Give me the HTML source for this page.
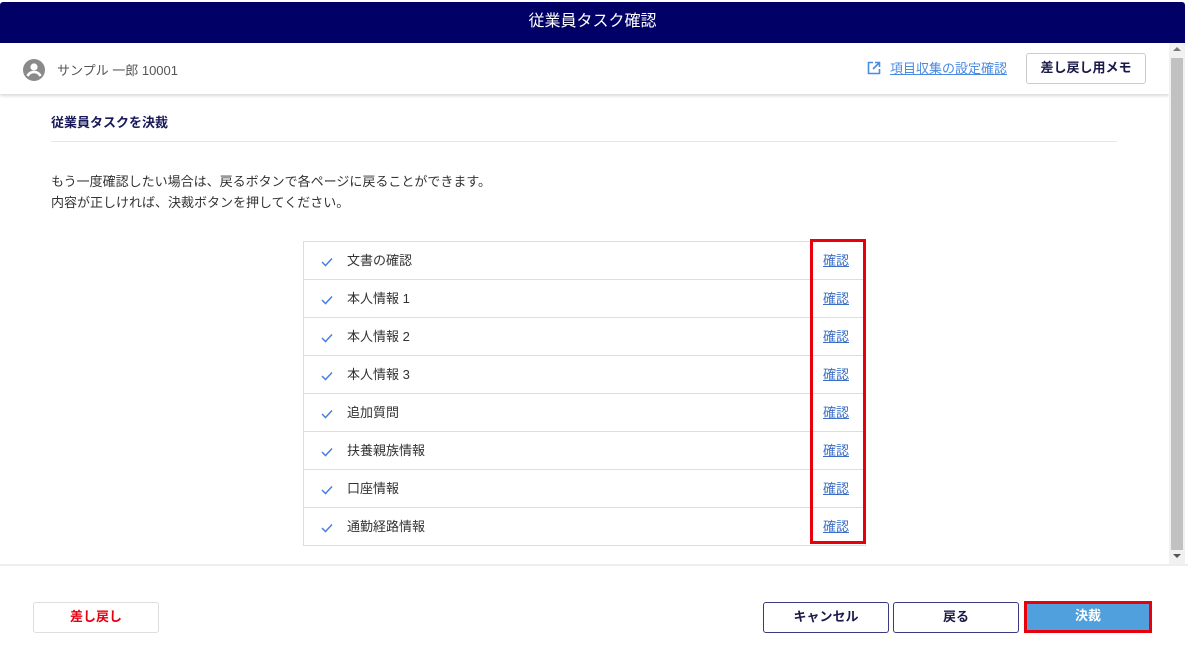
<!DOCTYPE html>
<html><head><meta charset="utf-8"><style>
*{box-sizing:border-box;margin:0;padding:0}
body{width:1188px;height:658px;background:#fff;font-family:"Liberation Sans","Noto Sans CJK JP",sans-serif;position:relative;overflow:hidden;color:#333}
.hdr{position:absolute;left:0;top:2px;width:1185px;height:41px;background:#000066;border-radius:3px 3px 0 0;color:#fff;font-size:16px;text-align:center;line-height:39px}
.sub{position:absolute;left:0;top:43px;width:1169px;height:51px;background:#fff;box-shadow:0 2px 3px rgba(0,0,0,.15)}
.sb{position:absolute;left:1169px;top:43px;width:16px;height:522px;background:#f1f1f1}
.sb .th{position:absolute;left:2px;top:15px;width:12px;height:492px;background:#c1c1c1}
.abs{position:absolute}
.btn{position:absolute;border:1px solid #3a3a80;border-radius:3px;background:#fff;font-weight:bold;font-size:13px;text-align:center;color:#1a1a4a}
.row{position:absolute;left:303px;width:563px;height:38px;border:1px solid #ddd;border-top:none;font-size:13px;color:#333}
.row .t{position:absolute;left:43px;top:8px}
.row .l{position:absolute;left:519px;top:8px;color:#3b6fc7;text-decoration:underline}
.row svg{position:absolute;left:17px;top:15px}
</style></head><body>
<div class="hdr">従業員タスク確認</div>
<div class="sub">
<svg class="abs" style="left:22px;top:15px" width="24" height="24" viewBox="0 0 24 24"><circle cx="12" cy="12" r="11" fill="#8a8a8a"/><circle cx="12" cy="9" r="3.6" fill="#fff"/><path d="M5.5 18c1.5-3 4-4 6.5-4s5 1 6.5 4" stroke="#fff" stroke-width="2.6" fill="none"/></svg>
<div class="abs" style="left:57px;top:17px;font-size:13px;color:#555">サンプル 一郎 10001</div>
<svg class="abs" style="left:867px;top:18px" width="14" height="14" viewBox="0 0 14 14"><path d="M6 1.5H1.5v11h11V8" stroke="#4a8be0" stroke-width="1.6" fill="none"/><path d="M8 1.5h4.5V6M12.5 1.5L6 8" stroke="#4a8be0" stroke-width="1.6" fill="none"/></svg>
<div class="abs" style="left:890px;top:15px;font-size:13px;color:#4a8be0;text-decoration:underline">項目収集の設定確認</div>
<div class="btn" style="left:1026px;top:10px;width:120px;height:31px;line-height:27px;border-color:#ccc">差し戻し用メモ</div>
</div>
<div class="sb"><div class="th"></div><div class="abs" style="left:4px;top:4px;border:4px solid transparent;border-bottom:4px solid #777;border-top:none"></div><div class="abs" style="left:4px;top:511px;border:4px solid transparent;border-top:4px solid #555;border-bottom:none"></div></div>
<div class="abs" style="left:51px;top:112px;font-size:13px;font-weight:bold;color:#1a1a5a">従業員タスクを決裁</div>
<div class="abs" style="left:51px;top:141px;width:1066px;height:1px;background:#e6e6e6"></div>
<div class="abs" style="left:51px;top:171px;font-size:13px;line-height:21px;color:#333">もう一度確認したい場合は、戻るボタンで各ページに戻ることができます。<br>内容が正しければ、決裁ボタンを押してください。</div>
<div class="abs" style="left:303px;top:241px;width:563px;height:1px;background:#ddd"></div>
<div class="row" style="top:242px"><svg width="12" height="10"><path d="M1 5l3.5 3.5L11 1.5" stroke="#4a7fe0" stroke-width="1.5" fill="none"/></svg><span class="t">文書の確認</span><span class="l">確認</span></div>
<div class="row" style="top:280px"><svg width="12" height="10"><path d="M1 5l3.5 3.5L11 1.5" stroke="#4a7fe0" stroke-width="1.5" fill="none"/></svg><span class="t">本人情報 1</span><span class="l">確認</span></div>
<div class="row" style="top:318px"><svg width="12" height="10"><path d="M1 5l3.5 3.5L11 1.5" stroke="#4a7fe0" stroke-width="1.5" fill="none"/></svg><span class="t">本人情報 2</span><span class="l">確認</span></div>
<div class="row" style="top:356px"><svg width="12" height="10"><path d="M1 5l3.5 3.5L11 1.5" stroke="#4a7fe0" stroke-width="1.5" fill="none"/></svg><span class="t">本人情報 3</span><span class="l">確認</span></div>
<div class="row" style="top:394px"><svg width="12" height="10"><path d="M1 5l3.5 3.5L11 1.5" stroke="#4a7fe0" stroke-width="1.5" fill="none"/></svg><span class="t">追加質問</span><span class="l">確認</span></div>
<div class="row" style="top:432px"><svg width="12" height="10"><path d="M1 5l3.5 3.5L11 1.5" stroke="#4a7fe0" stroke-width="1.5" fill="none"/></svg><span class="t">扶養親族情報</span><span class="l">確認</span></div>
<div class="row" style="top:470px"><svg width="12" height="10"><path d="M1 5l3.5 3.5L11 1.5" stroke="#4a7fe0" stroke-width="1.5" fill="none"/></svg><span class="t">口座情報</span><span class="l">確認</span></div>
<div class="row" style="top:508px"><svg width="12" height="10"><path d="M1 5l3.5 3.5L11 1.5" stroke="#4a7fe0" stroke-width="1.5" fill="none"/></svg><span class="t">通勤経路情報</span><span class="l">確認</span></div>
<div class="abs" style="left:810px;top:239px;width:56px;height:305px;border:3px solid #e8000b"></div>
<div class="abs" style="left:0;top:564px;width:1188px;height:2px;background:#eee"></div>
<div class="btn" style="left:33px;top:602px;width:126px;height:31px;line-height:27px;border-color:#ddd;color:#e60012">差し戻し</div>
<div class="btn" style="left:763px;top:602px;width:126px;height:31px;line-height:27px">キャンセル</div>
<div class="btn" style="left:893px;top:602px;width:126px;height:31px;line-height:27px">戻る</div>
<div class="abs" style="left:1024px;top:601px;width:128px;height:32px;border:3px solid #e8000b;background:#4fa0dc;color:#fff;font-weight:bold;font-size:13px;text-align:center;line-height:24px">決裁</div>
</body></html>
